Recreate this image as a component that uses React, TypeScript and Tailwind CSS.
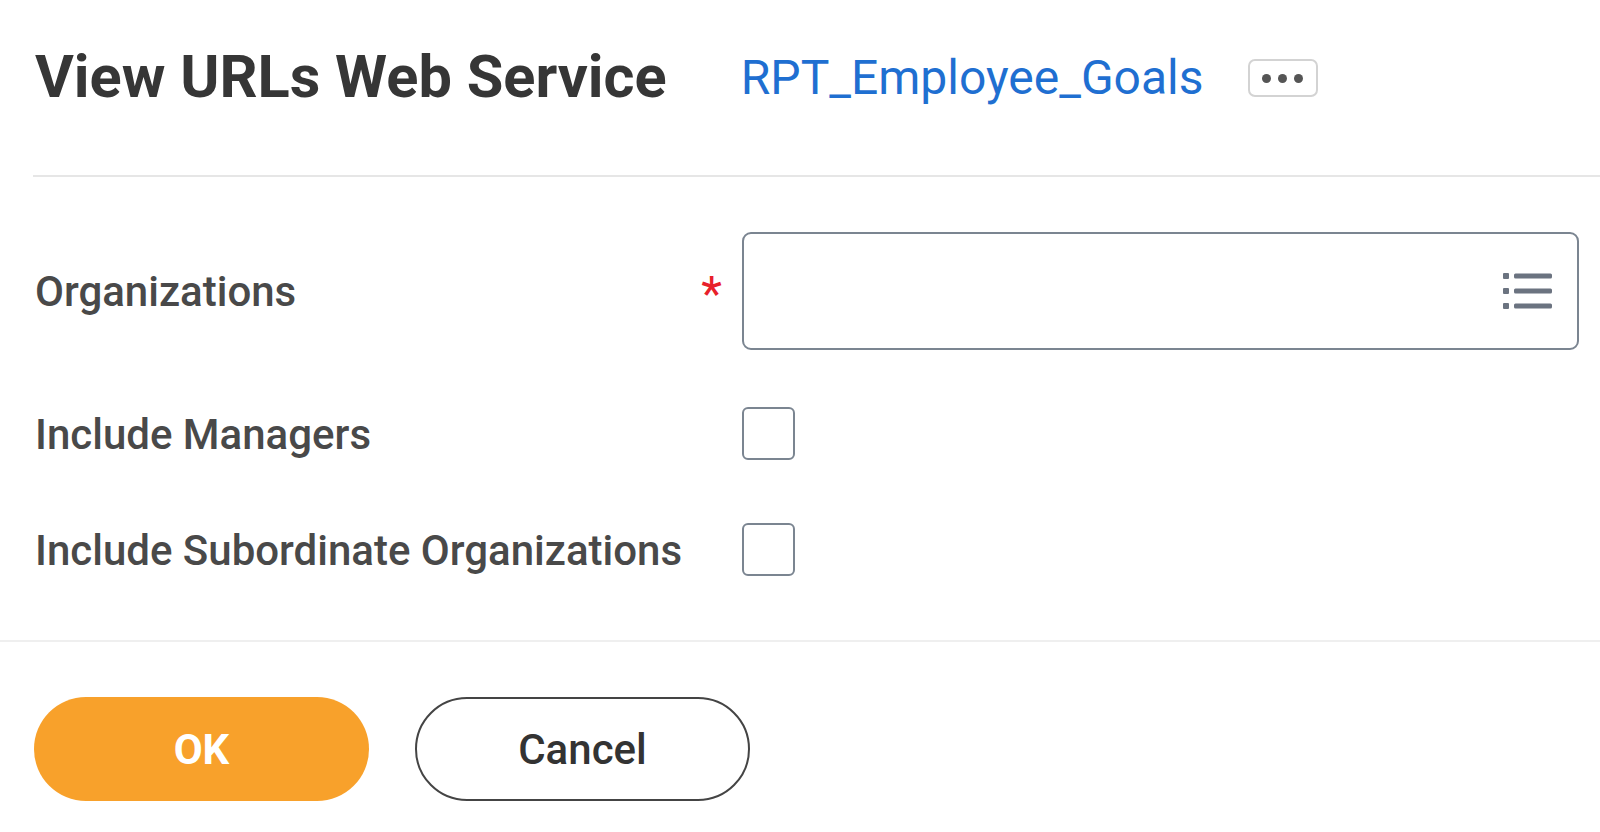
import { useState } from 'react';

// Lista de campos del formulario
const checkFields = ['Include Managers', 'Include Subordinate Organizations'];

const ListIcon = () => (
  <svg width="50" height="38" viewBox="0 0 50 38" fill="#6b7380">
    <rect x="0" y="1" width="6" height="6" rx="1" />
    <rect x="11" y="1.5" width="38" height="5" rx="1.5" />
    <rect x="0" y="16" width="6" height="6" rx="1" />
    <rect x="11" y="16.5" width="38" height="5" rx="1.5" />
    <rect x="0" y="31" width="6" height="6" rx="1" />
    <rect x="11" y="31.5" width="38" height="5" rx="1.5" />
  </svg>
);

const App = () => {
  const [checked, setChecked] = useState<{ [k: string]: boolean }>({});

  return (
    <div className="h-screen overflow-hidden bg-white pt-[44px] font-['Roboto','Liberation_Sans',sans-serif] text-[#333333]">
      {/* Cabecera */}
      <div className="flex items-center h-[68px] pl-[35px]">
        <h1 className="text-[59.5px] leading-none font-bold text-[#363636]">View URLs Web Service</h1>
        <a className="ml-[74px] text-[48px] leading-none text-[#1f6fd1]">RPT_Employee_Goals</a>
        <button className="ml-[44px] flex items-center justify-center gap-[7px] w-[70px] h-[38px] rounded-[7px] border-2 border-[#d3d3d3] bg-white">
          <span className="w-[9px] h-[9px] rounded-full bg-[#555555]" />
          <span className="w-[9px] h-[9px] rounded-full bg-[#555555]" />
          <span className="w-[9px] h-[9px] rounded-full bg-[#555555]" />
        </button>
      </div>

      <div className="ml-[33px] mt-[63px] h-[2px] bg-[#e6e6e6]" />

      {/* Formulario */}
      <div className="pl-[35px] pt-[55px]">
        <div className="flex items-center">
          <div className="w-[707px] flex items-center justify-between pr-[20px]">
            <span className="text-[42px] font-medium text-[#494949]">Organizations</span>
            <span className="text-[48px] leading-none text-[#e8202a] mt-[6px]">*</span>
          </div>
          <div className="flex-1 mr-[21px] h-[118px] rounded-[9px] border-2 border-[#7b8591] flex items-center justify-end pr-[24px]">
            <ListIcon />
          </div>
        </div>

        <div className="mt-[25px]">
          {checkFields.map((f) => (
            <div key={f} className="flex items-center h-[116px]">
              <span className="w-[707px] text-[42px] font-medium text-[#494949] mt-[3px]">{f}</span>
              <button
                onClick={() => setChecked((p) => ({ ...p, [f]: !p[f] }))}
                className="w-[53px] h-[53px] rounded-[6px] border-2 border-[#7b8591] bg-white"
              />
            </div>
          ))}
        </div>
      </div>

      <div className="mt-[33px] h-[2px] bg-[#efefef]" />

      {/* Acciones */}
      <div className="flex gap-[46px] pl-[34px] pt-[55px]">
        <button className="w-[335px] h-[104px] rounded-full bg-[#f8a12b] text-white text-[42px] font-bold">OK</button>
        <button className="w-[335px] h-[104px] rounded-full border-2 border-[#444444] bg-white text-[#333333] text-[42px] font-medium">Cancel</button>
      </div>
    </div>
  );
};

export default App;
